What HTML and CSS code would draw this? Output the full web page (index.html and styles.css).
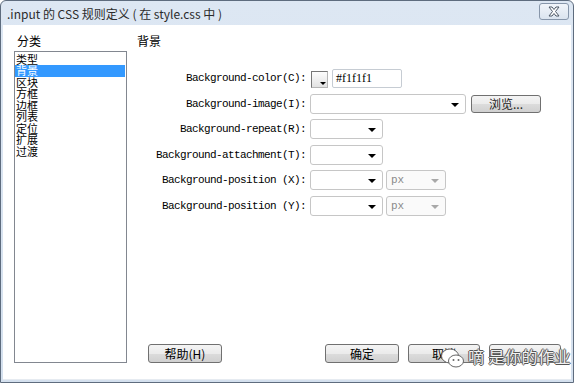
FILE: index.html
```html
<!DOCTYPE html>
<html lang="zh-cn">
<head>
    <meta charset="UTF-8">
    <title>.input 的 CSS 规则定义</title>
    <link rel="stylesheet" href="styles.css">
</head>
<body>
    <div class="window">
        <div class="titlebar">
            <span class="title">.input 的 CSS 规则定义 ( 在 style.css 中 )</span>
            <button class="close-btn">
                <svg width="14" height="11" viewBox="0 0 14 11">
                    <path d="M2 1 L5 1 L7 3.5 L9 1 L12 1 L8.5 5.5 L12 10 L9 10 L7 7.5 L5 10 L2 10 L5.5 5.5 Z" fill="#fff" stroke="#4d5866" stroke-width="1" stroke-linejoin="round"/>
                </svg>
            </button>
        </div>

        <div class="client">
            <div class="main">
                <!-- 分类 -->
                <div class="category">
                    <div class="heading">分类</div>
                    <ul class="cat-list">
                        <li>类型</li>
                        <li class="selected">背景</li>
                        <li>区块</li>
                        <li>方框</li>
                        <li>边框</li>
                        <li>列表</li>
                        <li>定位</li>
                        <li>扩展</li>
                        <li>过渡</li>
                    </ul>
                </div>

                <!-- 背景 -->
                <div class="panel">
                    <div class="heading">背景</div>
                    <div class="form">
                        <label>Background-color(C):</label>
                        <div class="field">
                            <span class="swatch"></span>
                            <span class="text-input">#f1f1f1</span>
                        </div>

                        <label>Background-image(I):</label>
                        <div class="field">
                            <span class="select wide"></span>
                            <button class="btn browse">浏览...</button>
                        </div>

                        <label>Background-repeat(R):</label>
                        <div class="field"><span class="select"></span></div>

                        <label>Background-attachment(T):</label>
                        <div class="field"><span class="select"></span></div>

                        <label>Background-position (X):</label>
                        <div class="field">
                            <span class="select"></span>
                            <span class="select unit">px</span>
                        </div>

                        <label>Background-position (Y):</label>
                        <div class="field">
                            <span class="select"></span>
                            <span class="select unit">px</span>
                        </div>
                    </div>

                    <div class="footer">
                        <button class="btn">帮助(H)</button>
                        <div class="actions">
                            <button class="btn">确定</button>
                            <button class="btn">取消</button>
                            <button class="btn"></button>
                        </div>
                    </div>
                </div>
            </div>
        </div>

        <!-- 水印 -->
        <div class="watermark">
            <span class="wm-icon">
                <svg width="26" height="24" viewBox="0 0 26 24">
                    <ellipse cx="10" cy="10" rx="8.5" ry="7" fill="#fff" stroke="#666" stroke-width="1"/>
                    <ellipse cx="16" cy="15" rx="7.5" ry="6" fill="#fff" stroke="#666" stroke-width="1"/>
                    <circle cx="13.5" cy="14" r="1" fill="#666"/>
                    <circle cx="18.5" cy="14" r="1" fill="#666"/>
                </svg>
            </span>
            <span class="wm-text">嘀 是你的作业</span>
        </div>
    </div>
</body>
</html>
```

FILE: styles.css
```css
* {
    margin: 0;
    padding: 0;
    box-sizing: border-box;
}

body {
    width: 574px;
    height: 383px;
    overflow: hidden;
    background: #fff;
    font-family: "Noto Sans CJK SC", "Noto Sans", sans-serif;
    font-size: 12px;
    color: #000;
}

.window {
    position: relative;
    width: 574px;
    height: 383px;
    border: 1px solid #5e6c7e;
    border-radius: 6px 6px 0 0;
    background: linear-gradient(#dde7f3, #d4e0ee);
    display: flex;
    flex-direction: column;
}

/* 标题栏 */
.titlebar {
    height: 24px;
    display: flex;
    align-items: center;
    justify-content: space-between;
    padding: 0 4px 0 6px;
}

.title {
    font-size: 12px;
    color: #2b2b2b;
}

.close-btn {
    width: 30px;
    height: 17px;
    margin-top: -3px;
    border: 1px solid #8796aa;
    border-radius: 3px;
    background: linear-gradient(#f1f5fa, #dbe4ef);
    display: flex;
    align-items: center;
    justify-content: center;
}

/* 内容区 */
.client {
    flex: 1;
    margin: 0 2px 2px;
    background: #fff;
    border-bottom: 1px solid #e6ebf1;
}

.main {
    display: flex;
    padding: 0 10px 0 11px;
}

.heading {
    height: 26px;
    padding-top: 9px;
    line-height: 14px;
    padding-left: 3px;
}

.category {
    width: 113px;
}

.cat-list {
    list-style: none;
    height: 312px;
    border: 1px solid #828790;
    padding-top: 1.5px;
}

.cat-list li {
    height: 11.5px;
    line-height: 11.5px;
    font-size: 11px;
    padding-left: 1px;
    margin-right: 1px;
}

.cat-list li.selected {
    background: #3399ff;
    color: #fff;
}

.panel {
    flex: 1;
    margin-left: 10px;
    display: flex;
    flex-direction: column;
}

.panel .heading {
    padding-left: 0;
}

/* 表单 */
.form {
    margin-top: 17px;
    display: grid;
    grid-template-columns: 169px auto;
    column-gap: 4px;
    row-gap: 5.6px;
}

.form label {
    height: 20px;
    line-height: 20px;
    text-align: right;
    font-family: "Liberation Mono", monospace;
    font-size: 11px;
    letter-spacing: -0.6px;
    color: #000;
}

.field {
    height: 20px;
    display: flex;
    align-items: center;
    gap: 3px;
}

.swatch {
    position: relative;
    width: 17px;
    height: 17px;
    margin: 2px 1px 0 1px;
    border: 1px solid #777;
    border-right-color: #b5b5b5;
    border-bottom-color: #b5b5b5;
    background: linear-gradient(#fdfdfd, #e2e2e2);
}

.swatch::after {
    content: "";
    position: absolute;
    right: 1px;
    bottom: 2px;
    border-left: 3px solid transparent;
    border-right: 3px solid transparent;
    border-top: 3px solid #000;
}

.text-input {
    width: 70px;
    height: 19px;
    border: 1px solid #c6ccd3;
    border-radius: 2px;
    padding-left: 3px;
    line-height: 17px;
    font-family: "Liberation Serif", serif;
    font-size: 12px;
}

.select {
    position: relative;
    width: 73px;
    height: 20px;
    border: 1px solid #c6c6c6;
    border-radius: 3px;
    background: #fff;
}

.select::after {
    content: "";
    position: absolute;
    right: 6px;
    top: 8px;
    border-left: 4px solid transparent;
    border-right: 4px solid transparent;
    border-top: 4px solid #000;
}

.select.wide {
    width: 156px;
}

.select.unit {
    width: 60px;
    height: 20px;
    background: #fafafa;
    color: #8a8a8a;
    padding-left: 4px;
    line-height: 18px;
    font-family: "Liberation Mono", monospace;
    font-size: 11px;
}

.select.unit::after {
    border-top-color: #a8a8a8;
}

/* 按钮 */
.btn {
    width: 72px;
    height: 19px;
    border: 1px solid #707070;
    border-radius: 3px;
    background: linear-gradient(#f4f4f4 0%, #ebebeb 50%, #dcdcdc 51%, #d0d0d0 100%);
    font-family: "Noto Sans CJK SC", sans-serif;
    font-size: 12px;
    line-height: 16px;
    color: #000;
}

.browse {
    width: 70px;
    height: 18px;
    margin-left: 2px;
    color: #222;
}

.footer {
    margin-top: auto;
    display: flex;
    justify-content: space-between;
    padding-left: 11px;
}

.footer .btn:first-child {
    width: 74px;
}

.actions {
    display: flex;
    gap: 9px;
}

/* 水印 */
.watermark {
    position: absolute;
    left: 439px;
    top: 341px;
    display: flex;
    align-items: center;
    gap: 2px;
}

.wm-icon {
    display: flex;
    margin-top: 4px;
}

.wm-text {
    font-size: 16px;
    color: #f2f2f2;
    letter-spacing: 0.5px;
    text-shadow: -1px 0 #555, 1px 0 #555, 0 -1px #555, 0 1px #555;
}
```
